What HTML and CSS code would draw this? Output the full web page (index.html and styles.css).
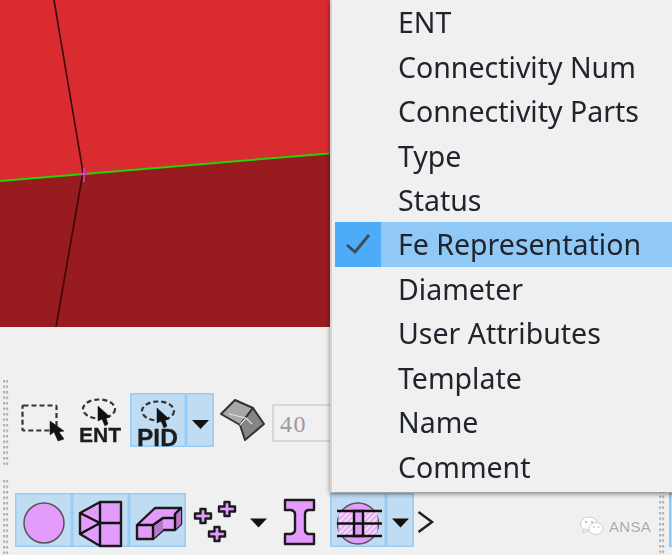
FILE: index.html
```html
<!DOCTYPE html>
<html lang="en">
<head>
<meta charset="utf-8">
<title>ANSA</title>
<link rel="stylesheet" href="styles.css">
</head>
<body>
<div class="app">
  <svg class="canvas" viewBox="0 0 672 327" width="672" height="327">
    <rect class="face-top" width="672" height="327"/>
    <polygon class="face-bottom" points="0,181 329,153.5 672,153.5 672,327 0,327"/>
    <polyline class="edge-black" points="54,0 83,172 56,327"/>
    <line class="edge-green" x1="0" y1="181" x2="329" y2="153.5"/>
    <path class="node" d="M84 168V182M79 174H90"/>
  </svg>

  <div class="toolbars">
    <div class="row row-one">
      <div class="grip"></div>
      <svg class="ico w64" viewBox="15 393 64 54">
        <rect class="dash" x="22.5" y="405.5" width="34" height="25" rx="1"/>
        <path class="cursor" d="M50 421L50 435L54 432L58 441L64 439L59 432L64 431Z"/>
      </svg>
      <div class="stack w51">
        <svg class="glyph" viewBox="79 393 51 34">
          <ellipse class="dash" cx="99" cy="409" rx="16" ry="9.5"/>
          <path class="cursor" d="M98 406L98 421L102 419L105 426L108 424L106 418L110 417Z"/>
        </svg>
        <span class="lbl ent">ENT</span>
      </div>
      <div class="group">
        <div class="stack btn w56">
          <svg class="glyph" viewBox="130 393 56 36">
            <ellipse class="dash" cx="158" cy="411" rx="16" ry="9.5"/>
            <path class="cursor" d="M157 408L157 423L161 421L164 428L167 426L165 420L169 419Z"/>
          </svg>
          <span class="lbl pid">PID</span>
        </div>
        <svg class="btn w28" viewBox="186 393 28 54">
          <path class="tri" d="M192 420H209L200.500 429Z"/>
        </svg>
      </div>
      <svg class="ico w58" viewBox="214 393 58 54">
        <polygon class="plate-a" points="235,400 221,414 240,425 253,408"/>
        <polygon class="plate-b" points="253,408 240,425 245,440 264,424"/>
        <path class="fold" d="M229 414L246 418M246 418L240 425M246 418L252 424"/>
      </svg>
      <div class="field">40</div>
    </div>

    <div class="row row-two">
      <div class="grip"></div>
      <div class="group">
        <svg class="btn w57" viewBox="15 493 57 54">
          <circle class="solid thin" cx="44" cy="523" r="20"/>
        </svg>
        <svg class="btn w57" viewBox="72 493 57 54">
          <path class="solid" d="M80 513L100 502H121V546H100L80 534Z"/>
          <path class="line" d="M100 502V546M100 523H121M80 513L100 523L80 534"/>
        </svg>
        <svg class="btn w57" viewBox="129 493 57 54">
          <path class="solid" d="M137 525L155 508H181V524L175 530H163L153 539H137Z"/>
          <path class="shade" d="M153 525L163 518V530L153 539ZM175 514L181 508V524L175 530Z"/>
          <path class="line" d="M137 525H153V539M153 525L163 518H175V514L181 508M175 518V530"/>
        </svg>
      </div>
      <svg class="ico w90" viewBox="186 493 90 54">
        <path class="solid" d="M200.500 509H205.500V513.500H211V518.500H205.500V523H200.500V518.500H195V513.500H200.500Z"/>
        <path class="solid" d="M224.500 502H229.500V506.500H235V511.500H229.500V516H224.500V511.500H219V506.500H224.500Z"/>
        <path class="solid" d="M214.500 527H219.500V531.500H225V536.500H219.500V541H214.500V536.500H209V531.500H214.500Z"/>
        <path class="tri" d="M250 518.500H267L258.500 527.500Z"/>
      </svg>
      <svg class="ico w54" viewBox="276 493 54 54">
        <path class="solid" d="M285 500H314V510H308Q305 511 305 514V530Q305 533 308 534H314V544H285V534H291Q295 533 295 530V514Q295 511 291 510H285Z"/>
      </svg>
      <div class="group">
        <svg class="btn w56" viewBox="330 493 56 54">
          <defs>
            <pattern id="hatch" width="4" height="4" patternUnits="userSpaceOnUse" patternTransform="rotate(45)">
              <rect width="4" height="4" class="hatch-bg"/>
              <rect width="2" height="4" class="hatch-fg"/>
            </pattern>
          </defs>
          <circle class="solid thin" cx="358" cy="523.500" r="20.500"/>
          <rect class="hatched" x="338.500" y="511" width="39" height="25"/>
          <rect class="web" x="354" y="511" width="9" height="25"/>
          <path class="line" d="M337 511H382M337 523.500H382M337 536H382"/>
        </svg>
        <svg class="btn w28" viewBox="386 493 28 54">
          <path class="tri" d="M392 518.500H409L400.500 527.500Z"/>
        </svg>
      </div>
      <svg class="ico w24" viewBox="414 493 24 54">
        <path class="chevron" d="M418.500 512L432 522L418.500 532"/>
      </svg>
      <div class="grip grip-right"></div>
      <div class="cut-btn"></div>
    </div>
  </div>

  <div class="watermark">
    <svg class="wechat" viewBox="0 0 24 20" width="24" height="20">
      <ellipse class="bubble" cx="9" cy="8" rx="8.500" ry="7"/>
      <path class="bubble" d="M4 13L3 17L8 14Z"/>
      <ellipse class="bubble" cx="16" cy="12.500" rx="7" ry="6"/>
      <circle class="eye" cx="6" cy="6" r="1"/>
      <circle class="eye" cx="12" cy="6" r="1"/>
      <circle class="eye" cx="14" cy="11" r="0.800"/>
      <circle class="eye" cx="18.500" cy="11" r="0.800"/>
    </svg>
    <span class="mark-text">ANSA</span>
  </div>

  <ul class="menu">
    <li class="item"><span class="check"></span><span class="label">ENT</span></li>
    <li class="item"><span class="check"></span><span class="label">Connectivity Num</span></li>
    <li class="item"><span class="check"></span><span class="label">Connectivity Parts</span></li>
    <li class="item"><span class="check"></span><span class="label">Type</span></li>
    <li class="item"><span class="check"></span><span class="label">Status</span></li>
    <li class="item selected">
      <span class="check"><svg viewBox="0 0 46 44" width="46" height="44"><path class="tick" d="M12 23L20 30L34 13"/></svg></span>
      <span class="label">Fe Representation</span>
    </li>
    <li class="item"><span class="check"></span><span class="label">Diameter</span></li>
    <li class="item"><span class="check"></span><span class="label">User Attributes</span></li>
    <li class="item"><span class="check"></span><span class="label">Template</span></li>
    <li class="item"><span class="check"></span><span class="label">Name</span></li>
    <li class="item"><span class="check"></span><span class="label">Comment</span></li>
  </ul>
</div>
</body>
</html>
```
FILE: styles.css
```css
* { box-sizing: border-box; }
html, body { margin: 0; padding: 0; background: #f0f0f0; }
.app {
  position: relative;
  width: 672px;
  height: 555px;
  overflow: hidden;
  background: #f0f0f0;
  font-family: "Noto Sans", "Open Sans", sans-serif;
}
svg { display: block; flex: none; overflow: visible; }

/* 3D view */
.canvas { filter: blur(0.3px); overflow: hidden; }
.face-top { fill: #d92b30; }
.face-bottom { fill: #981c1f; }
.edge-black { fill: none; stroke: #3c080a; stroke-width: 1.6; }
.edge-green { stroke: #22d400; stroke-width: 2; }
.node { fill: none; stroke: #e040c8; stroke-width: 1.5; }

/* toolbars */
.toolbars { margin-top: 53px; display: flex; flex-direction: column; gap: 14px; }
.row { display: flex; align-items: flex-start; position: relative; }
.row-one { height: 86px; padding-top: 13px; }
.row-two { height: 75px; padding-top: 13px; }
.row > svg, .row > .group, .row > .stack { filter: blur(0.4px); }
.grip {
  flex: none;
  width: 6px;
  margin: -13px 6px 0 3px;
  background-image: radial-gradient(circle at 1.2px 1.2px, #b0b0b0 0, #b0b0b0 1px, transparent 1.5px);
  background-size: 3px 5.5px;
}
.row-one > .grip:first-child { height: 86px; }
.row-two > .grip:first-child { height: 75px; }
.grip-right { margin: 0; position: absolute; right: 7px; top: 10px; height: 65px; }
.cut-btn {
  position: absolute;
  left: 669px;
  top: 13px;
  width: 10px;
  height: 54px;
  background: #bfdcf2;
  box-shadow: inset 0 0 0 2px #90c8f6;
}
.group { display: flex; flex: none; }
.btn { height: 54px; background: #bfdcf2; box-shadow: inset 0 0 0 1.500px #97ccf7; }
.ico { height: 54px; }
.stack { display: flex; flex-direction: column; align-items: flex-start; flex: none; height: 54px; }
.glyph { width: 100%; }
.w24 { width: 24px; }
.w28 { width: 28px; }
.w51 { width: 51px; }
.w54 { width: 54px; }
.w56 { width: 56px; }
.w57 { width: 57px; }
.w58 { width: 58px; }
.w64 { width: 64px; }
.w90 { width: 90px; }

.stack > .glyph { flex: none; }
.stack:not(.btn) > .glyph { height: 34px; }
.btn > .glyph { height: 36px; }

.dash { fill: none; stroke: #333; stroke-width: 2.200; stroke-dasharray: 5 3; }
.cursor { fill: #111; stroke: #111; stroke-width: 0.500; }
.lbl {
  font-family: "Liberation Sans", sans-serif;
  font-weight: 700;
  color: #1c1c1c;
  -webkit-text-stroke: 0.300px #1c1c1c;
}
.ent { font-size: 21px; line-height: 16px; }
.pid { font-size: 24.500px; line-height: 18px; margin-left: 7px; }
.tri { fill: #111; }
.solid { fill: #e39cfb; stroke: #1c1c1c; stroke-width: 2.400; stroke-linejoin: round; }
.solid.thin { stroke: #555; stroke-width: 1.500; }
.line { fill: none; stroke: #111; stroke-width: 2.400; }
.shade { fill: #b877c8; }
.hatch-bg { fill: #e6a8fa; }
.hatch-fg { fill: #f2dff5; }
.hatched { fill: url(#hatch); }
.web { fill: #e39cfb; stroke: #111; stroke-width: 2.400; }
.chevron { fill: none; stroke: #222; stroke-width: 2.500; }
.plate-a { fill: #a8a8a8; stroke: #333; stroke-width: 2; stroke-linejoin: round; }
.plate-b { fill: #858585; stroke: #333; stroke-width: 2; stroke-linejoin: round; }
.fold { fill: none; stroke: #e4e4e4; stroke-width: 1.200; }
.field {
  flex: none;
  width: 80px;
  height: 38px;
  margin-top: 11px;
  padding-left: 6px;
  border: 2px solid #d6d6d6;
  font-family: "Liberation Serif", serif;
  font-size: 24px;
  letter-spacing: 1.500px;
  line-height: 36px;
  color: #9a9a9a;
}

/* watermark */
.watermark {
  position: absolute;
  left: 580px;
  top: 516px;
  display: flex;
  align-items: center;
  gap: 5px;
}
.bubble { fill: #fff; stroke: #c4c4c4; stroke-width: 0.800; }
.eye { fill: #aaa; }
.mark-text {
  font-family: "Liberation Sans", sans-serif;
  font-size: 15px;
  letter-spacing: 0.300px;
  color: #aaa;
  text-shadow: 0 0 2px #fff;
}

/* context menu */
.menu {
  position: absolute;
  left: 330px;
  top: 0;
  width: 350px;
  margin: 0;
  padding: 0 0 3px 3px;
  list-style: none;
  background: #f0f0f0;
  border-left: 2px solid #d2d2d2;
  box-shadow: 0 2px 5px rgba(0, 0, 0, 0.45);
}
.item {
  display: flex;
  align-items: center;
  height: 44.450px;
  font-size: 28.500px;
  color: #20242c;
}
.check { flex: none; width: 46px; height: 100%; display: flex; align-items: center; }
.label { margin-left: 17px; white-space: nowrap; filter: blur(0.25px); }
.selected { background: #90c8f6; }
.selected .check { background: #4dabf7; }
.tick { fill: none; stroke: #3d4a58; stroke-width: 2.800; }
```
